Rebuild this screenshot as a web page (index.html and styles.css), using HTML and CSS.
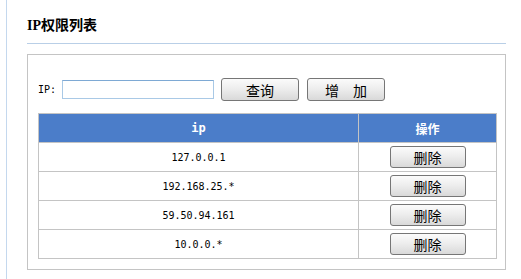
FILE: index.html
```html
<!DOCTYPE html>
<html lang="zh-CN">
<head>
  <meta charset="UTF-8" />
  <title>IP权限列表</title>
  <link rel="stylesheet" href="styles.css">
</head>
<body>
  <div class="page">
    <h2 class="title">IP权限列表</h2>

    <div class="panel">
      <!-- search bar -->
      <div class="search">
        <label class="search-label" for="ipInput">IP:</label>
        <input id="ipInput" class="search-input" type="text" />
        <button class="btn btn-wide">查询</button>
        <button class="btn btn-wide">增　加</button>
      </div>

      <!-- ip list -->
      <table class="ip-table">
        <thead>
          <tr>
            <th class="col-ip">ip</th>
            <th class="col-op">操作</th>
          </tr>
        </thead>
        <tbody>
          <tr>
            <td class="ip-cell">127.0.0.1</td>
            <td><button class="btn btn-del">删除</button></td>
          </tr>
          <tr>
            <td class="ip-cell">192.168.25.*</td>
            <td><button class="btn btn-del">删除</button></td>
          </tr>
          <tr>
            <td class="ip-cell">59.50.94.161</td>
            <td><button class="btn btn-del">删除</button></td>
          </tr>
          <tr>
            <td class="ip-cell">10.0.0.*</td>
            <td><button class="btn btn-del">删除</button></td>
          </tr>
        </tbody>
      </table>
    </div>
  </div>
</body>
</html>
```

FILE: styles.css
```css
* {
  margin: 0;
  padding: 0;
  box-sizing: border-box;
}
body {
  font-family: "Noto Sans CJK SC", sans-serif;
  font-size: 12px;
  color: #000;
  background: #fff;
  padding-left: 6px;
}
.page {
  border-left: 1px solid #c4d8ee;
  min-height: 279px;
  padding: 17px 15px 0 20px;
}
.title {
  font-family: "Liberation Serif", "Noto Sans CJK SC", serif;
  font-size: 14px;
  font-weight: bold;
  line-height: 18px;
  padding-bottom: 8px;
  border-bottom: 1px solid #b9cfe7;
}
.panel {
  margin-top: 10px;
  border: 1px solid #c4c4c4;
  padding: 23px 9px 10px 10px;
}

.search {
  display: flex;
  align-items: center;
  height: 23px;
}
.search-label {
  font-family: "DejaVu Sans Mono", monospace;
  font-size: 10px;
  width: 24px;
}
.search-input {
  width: 152px;
  height: 19px;
  border: 1px solid #a9c9e6;
  border-top-color: #7ea9d4;
  margin-right: 7px;
  outline: none;
}
.btn {
  font-family: "Noto Sans CJK SC", sans-serif;
  font-size: 14px;
  line-height: 1;
  color: #000;
  background: linear-gradient(to bottom, #fbfbfb, #ececec 50%, #d9d9d9);
  border: 1px solid #767676;
  border-radius: 3px;
  cursor: pointer;
}
.btn-wide {
  width: 78px;
  height: 23px;
  margin-right: 8px;
}
.btn-del {
  width: 76px;
  height: 22px;
}

.ip-table {
  width: 459px;
  margin-top: 12px;
  border-collapse: collapse;
  border: 1px solid #c4c4c4;
}
.ip-table th,
.ip-table td {
  border: 1px solid #c4c4c4;
  text-align: center;
  height: 29px;
  padding: 0;
}
.ip-table th {
  background: #4b7dc9;
  color: #fff;
  font-weight: bold;
  font-size: 12px;
}
.col-ip {
  width: 320px;
  font-family: "DejaVu Sans Mono", monospace;
}
.ip-cell {
  font-family: "DejaVu Sans Mono", monospace;
  font-size: 10px;
}
.ip-table td .btn {
  vertical-align: middle;
}
```
